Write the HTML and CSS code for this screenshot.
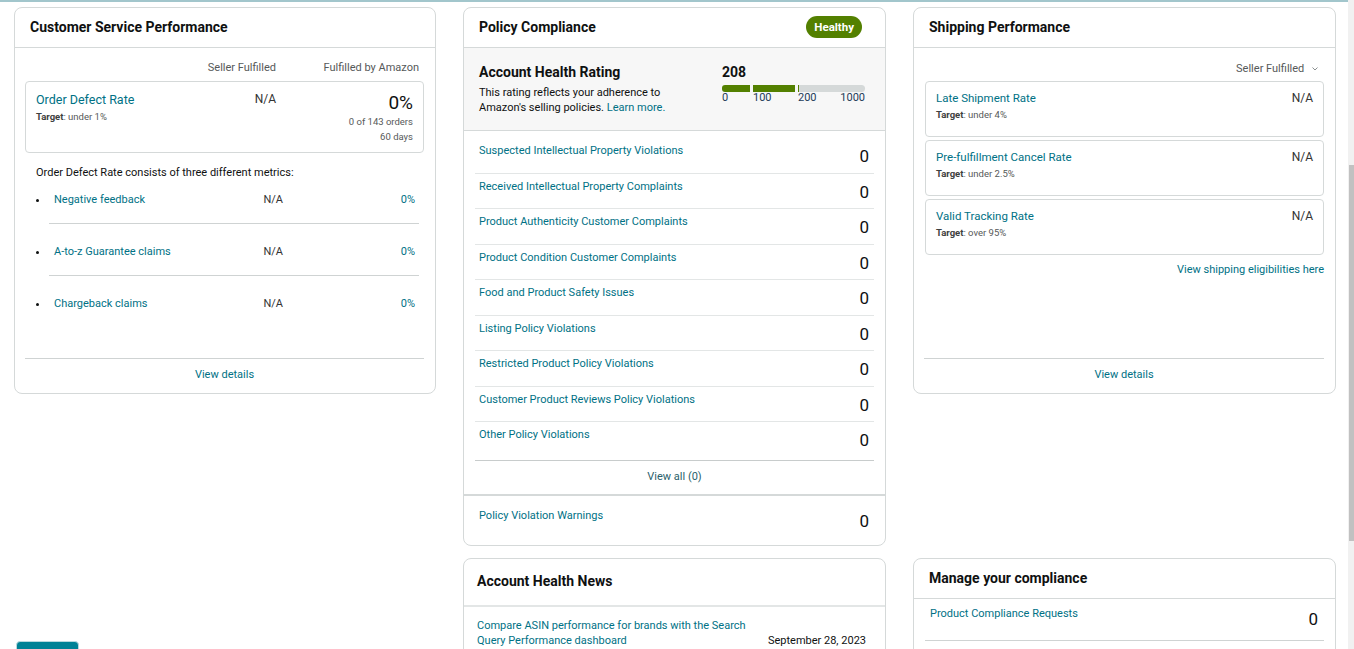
FILE: index.html
```html
<!DOCTYPE html>
<html lang="en">
<head>
<meta charset="utf-8">
<title>Account Health</title>
<link rel="stylesheet" href="styles.css">
</head>
<body>
<main class="grid">
  <section class="card card--tall">
    <header class="card-head"><h2>Customer Service Performance</h2></header>
    <div class="card-body csp-body">
      <div class="col-head"><span></span><span>Seller Fulfilled</span><span>Fulfilled by Amazon</span></div>
      <div class="metric-box">
        <div class="metric-name">
          <a class="link-lg" href="#">Order Defect Rate</a>
          <div class="target"><b>Target</b>: under 1%</div>
        </div>
        <div class="na">N/A</div>
        <div class="fba">
          <div class="big">0%</div>
          <div class="sub">0 of 143 orders</div>
          <div class="sub">60 days</div>
        </div>
      </div>
      <p class="intro">Order Defect Rate consists of three different metrics:</p>
      <ul class="sub-metrics">
        <li><div class="sub-row"><a href="#">Negative feedback</a><span>N/A</span><span class="pct">0%</span></div></li>
        <li><div class="sub-row"><a href="#">A-to-z Guarantee claims</a><span>N/A</span><span class="pct">0%</span></div></li>
        <li><div class="sub-row"><a href="#">Chargeback claims</a><span>N/A</span><span class="pct">0%</span></div></li>
      </ul>
    </div>
    <footer class="card-foot"><a href="#">View details</a></footer>
  </section>

  <section class="card policy">
    <header class="card-head"><h2>Policy Compliance</h2><span class="badge">Healthy</span></header>
    <div class="rating">
      <div class="rating-text">
        <h3>Account Health Rating</h3>
        <p>This rating reflects your adherence to Amazon's selling policies. <a href="#">Learn more.</a></p>
      </div>
      <div class="rating-score">
        <div class="score">208</div>
        <div class="bar">
          <div class="seg seg-a"></div>
          <div class="seg seg-b"></div>
          <div class="seg seg-c"><div class="seg-fill"></div></div>
        </div>
        <div class="bar-labels">
          <span class="lab-a">0</span>
          <span class="lab-b">100</span>
          <span class="lab-c"><span>200</span><span>1000</span></span>
        </div>
      </div>
    </div>
    <ul class="violations">
      <li><a href="#">Suspected Intellectual Property Violations</a><span class="count">0</span></li>
      <li><a href="#">Received Intellectual Property Complaints</a><span class="count">0</span></li>
      <li><a href="#">Product Authenticity Customer Complaints</a><span class="count">0</span></li>
      <li><a href="#">Product Condition Customer Complaints</a><span class="count">0</span></li>
      <li><a href="#">Food and Product Safety Issues</a><span class="count">0</span></li>
      <li><a href="#">Listing Policy Violations</a><span class="count">0</span></li>
      <li><a href="#">Restricted Product Policy Violations</a><span class="count">0</span></li>
      <li><a href="#">Customer Product Reviews Policy Violations</a><span class="count">0</span></li>
      <li><a href="#">Other Policy Violations</a><span class="count">0</span></li>
    </ul>
    <div class="view-all"><a href="#">View all (0)</a></div>
    <div class="warnings"><a href="#">Policy Violation Warnings</a><span class="count">0</span></div>
  </section>

  <section class="card card--tall">
    <header class="card-head"><h2>Shipping Performance</h2></header>
    <div class="card-body ship-body">
      <div class="dropdown">Seller Fulfilled
        <svg class="chev" width="6" height="4" viewBox="0 0 6 4"><path d="M0.5 0.5 L3 3 L5.5 0.5" fill="none" stroke="#8a8f8f" stroke-width="1"/></svg>
      </div>
      <div class="ship-box">
        <div><a href="#">Late Shipment Rate</a><div class="target"><b>Target</b>: under 4%</div></div>
        <div class="na">N/A</div>
      </div>
      <div class="ship-box">
        <div><a href="#">Pre-fulfillment Cancel Rate</a><div class="target"><b>Target</b>: under 2.5%</div></div>
        <div class="na">N/A</div>
      </div>
      <div class="ship-box">
        <div><a href="#">Valid Tracking Rate</a><div class="target"><b>Target</b>: over 95%</div></div>
        <div class="na">N/A</div>
      </div>
      <div class="elig"><a href="#">View shipping eligibilities here</a></div>
    </div>
    <footer class="card-foot"><a href="#">View details</a></footer>
  </section>

  <section class="card news">
    <header class="card-head card-head--news"><h2>Account Health News</h2></header>
    <div class="news-list">
      <div class="news-item">
        <a href="#">Compare ASIN performance for brands with the Search Query Performance dashboard</a>
        <span class="date">September 28, 2023</span>
      </div>
    </div>
  </section>

  <section class="card manage">
    <header class="card-head"><h2>Manage your compliance</h2></header>
    <ul class="manage-list">
      <li><a href="#">Product Compliance Requests</a><span class="count">0</span></li>
    </ul>
  </section>
</main>

<div class="scrollbar"><div class="thumb"></div></div>
<button class="feedback" type="button">FEEDBACK</button>
</body>
</html>
```

FILE: styles.css
```css
* {
  box-sizing: border-box;
  margin: 0;
  padding: 0;
}

html,
body {
  height: 100%;
}

body {
  font-family: Roboto, "Liberation Sans", Arial, sans-serif;
  font-size: 11px;
  line-height: 16px;
  color: #0f1111;
  background: #fff;
  border-top: 2px solid #a2c6cc;
  overflow: hidden;
}

a {
  color: #007185;
  text-decoration: none;
}

.grid {
  display: grid;
  grid-template-columns: 422px 423px 423px;
  column-gap: 27px;
  row-gap: 12px;
  padding: 5px 12px 0 14px;
  align-items: start;
}

.card {
  border: 1px solid #d5d9d9;
  border-radius: 8px;
  background: #fff;
  display: flex;
  flex-direction: column;
}

.card--tall {
  height: 387px;
}

.card-head {
  height: 40px;
  flex: none;
  border-bottom: 1px solid #d5d9d9;
  display: flex;
  align-items: center;
  justify-content: space-between;
  padding: 0 23px 2px 15px;
}

.card-head h2 {
  font-size: 14px;
  font-weight: 700;
  line-height: 20px;
}

.card-foot {
  margin: auto 11px 0 10px;
  border-top: 1px solid #cfd3d3;
  height: 35px;
  padding-top: 8px;
  text-align: center;
  flex: none;
}

/* Customer service */
.csp-body {
  padding: 0 11px 0 10px;
}

.col-head {
  display: grid;
  grid-template-columns: 1fr 90px 143px;
  padding: 12px 5px 0 0;
  color: #565959;
}

.col-head span {
  text-align: right;
}

.metric-box {
  margin-top: 5px;
  border: 1px solid #d5d9d9;
  border-radius: 4px;
  padding: 10px 10px 8px;
  display: grid;
  grid-template-columns: 1fr 90px 137px;
}

.link-lg {
  font-size: 12.5px;
  line-height: 16px;
}

.target {
  font-size: 9.5px;
  line-height: 15px;
  color: #565959;
}

.target b {
  color: #3c4040;
}

.na {
  text-align: right;
  font-size: 12px;
  line-height: 14px;
  color: #333;
}

.fba {
  text-align: right;
}

.big {
  font-size: 19px;
  line-height: 22px;
}

.sub {
  font-size: 9.5px;
  line-height: 15px;
  color: #565959;
}

.intro {
  margin: 12px 0 0 11px;
}

.sub-metrics {
  margin: 0 5px 0 24px;
  list-style: disc outside;
}

.sub-metrics li {
  padding: 20px 4px 15px 5px;
  border-bottom: 1px solid #cfd3d3;
}

.sub-metrics li:first-child {
  padding-top: 11px;
}

.sub-metrics li:last-child {
  border-bottom: none;
}

.sub-row {
  display: grid;
  grid-template-columns: 1fr 78px 132px;
}

.sub-row span {
  text-align: right;
  color: #333;
}

.sub-row .pct {
  color: #007185;
}

/* Policy */
.badge {
  background: #538000;
  color: #fff;
  font-weight: 700;
  font-size: 11.5px;
  line-height: 22px;
  height: 22px;
  padding: 0 8px;
  border-radius: 11px;
}

.rating {
  height: 83px;
  background: #f7f7f7;
  border-bottom: 1px solid #d5d9d9;
  display: flex;
  justify-content: space-between;
  padding: 14px 20px 0 15px;
}

.rating-text {
  width: 200px;
}

.rating-text h3 {
  font-size: 14px;
  font-weight: 700;
  line-height: 20px;
}

.rating-text p {
  margin-top: 3px;
  line-height: 15px;
}

.rating-score {
  width: 143px;
}

.score {
  font-size: 14px;
  font-weight: 700;
  line-height: 20px;
}

.bar {
  margin-top: 3px;
  height: 7px;
  display: flex;
  gap: 3px;
}

.seg {
  height: 7px;
}

.seg-a {
  width: 28px;
  background: #538000;
  border-radius: 3px 0 0 3px;
}

.seg-b {
  width: 42px;
  background: #538000;
}

.seg-c {
  flex: 1;
  background: #d5d9d9;
  border-radius: 0 4px 4px 0;
  display: flex;
}

.seg-fill {
  width: 1px;
  background: #538000;
}

.bar-labels {
  display: flex;
  gap: 3px;
  line-height: 12px;
  color: #1d3b58;
}

.lab-a {
  width: 28px;
}

.lab-b {
  width: 42px;
}

.lab-c {
  flex: 1;
  display: flex;
  justify-content: space-between;
}

.violations {
  list-style: none;
  margin: 0 11px;
  padding: 7px 0 2.5px;
}

.violations li {
  height: 35.5px;
  display: flex;
  justify-content: space-between;
  align-items: flex-start;
  padding: 5px 5px 0 4px;
  border-bottom: 1px solid #e3e6e6;
}

.violations li:last-child {
  border-bottom: none;
}

.count {
  font-size: 17px;
  line-height: 20px;
  margin-top: 3px;
  color: #0f1111;
}

.view-all {
  margin: 0 11px;
  border-top: 1px solid #c8cccc;
  height: 34px;
  padding-top: 8px;
  text-align: center;
}

.view-all a {
  color: #2b5f6b;
}

.warnings {
  border-top: 2px solid #d5d9d9;
  height: 51px;
  padding: 12px 16px 0 15px;
  display: flex;
  justify-content: space-between;
  align-items: flex-start;
}

/* Shipping */
.ship-body {
  padding: 0 11px;
}

.dropdown {
  padding: 13px 6px 0 0;
  line-height: 15px;
  text-align: right;
  color: #565959;
}

.chev {
  margin-left: 5px;
  vertical-align: 1px;
}

.ship-box {
  margin-top: 5px;
  height: 56px;
  border: 1px solid #d5d9d9;
  border-radius: 4px;
  padding: 8px 10px 0;
  display: flex;
  justify-content: space-between;
  align-items: flex-start;
}

.ship-box + .ship-box {
  margin-top: 3px;
}

.ship-box a {
  font-size: 11.5px;
}

.ship-box .na {
  line-height: 16px;
}

.elig {
  margin-top: 7px;
  text-align: right;
}

/* Second row cards continue below the fold */
.news,
.manage {
  min-height: 150px;
}

/* News */
.news {
  grid-column: 2;
}

.card-head--news {
  height: 48px;
  border-bottom: 2px solid #e3e6e6;
  padding-left: 13px;
}

.news-list {
  padding: 11px 19px 0 13px;
}

.news-item {
  display: flex;
  justify-content: space-between;
  align-items: flex-end;
  line-height: 15px;
  padding-bottom: 12px;
}

.news-item a {
  width: 292px;
}

.date {
  color: #0f1111;
  white-space: nowrap;
}

/* Manage */
.manage {
  grid-column: 3;
}

.manage-list {
  list-style: none;
  margin: 0 11px;
}

.manage-list li {
  height: 42px;
  padding: 7px 6px 0 5px;
  border-bottom: 1px solid #cfd3d3;
  display: flex;
  justify-content: space-between;
  align-items: flex-start;
}

/* overlays */
.scrollbar {
  position: fixed;
  top: 0;
  right: 0;
  width: 6px;
  height: 100%;
  background: #f1f1f1;
}

.thumb {
  position: absolute;
  right: 0;
  top: 165px;
  width: 5px;
  height: 376px;
  background: #c1c1c1;
}

.feedback {
  position: fixed;
  left: 16px;
  top: 641px;
  width: 63px;
  height: 24px;
  border: 1px solid #b9d9de;
  border-radius: 4px;
  background: #008296;
  color: #fff;
  font-family: Roboto, "Liberation Sans", Arial, sans-serif;
  font-size: 8px;
  font-weight: 700;
  line-height: 10px;
  padding-top: 4px;
  text-align: center;
}
```
